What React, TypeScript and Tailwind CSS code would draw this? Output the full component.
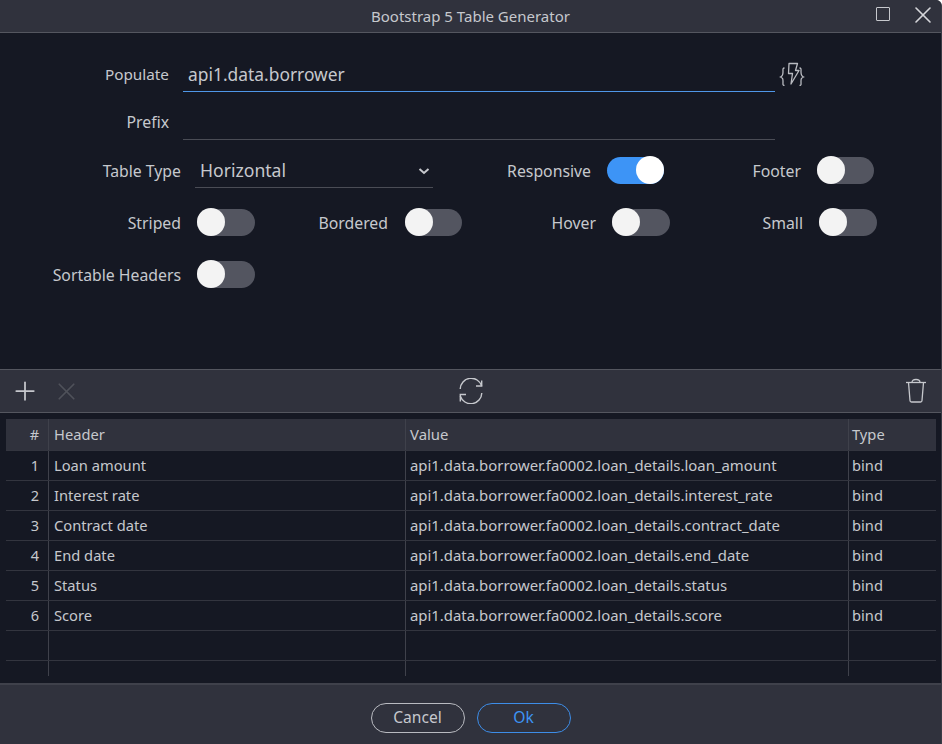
import React from "react";
import { Plus, X } from "lucide-react";

const font = "font-['Noto_Sans','Open_Sans',sans-serif]";

function Toggle({ on = false, className = "" }: { on?: boolean; className?: string }) {
  return (
    <div className={`relative h-[27px] shrink-0 rounded-full ${on ? "bg-[#3d94f6]" : "bg-[#535560]"} ${className}`}>
      <div className={`absolute top-[-1px] h-[28px] w-[28px] rounded-full ${on ? "right-0 bg-white" : "left-0 bg-[#f3f3f3]"}`} />
    </div>
  );
}

function Label({ text, w, size = "text-[15.8px]", className = "" }: { text: string; w: string; size?: string; className?: string }) {
  return <div className={`shrink-0 text-right leading-[20px] text-[#c6c8cd] ${size} ${w} ${className}`}>{text}</div>;
}

const rows = [
  ["1", "Loan amount", "api1.data.borrower.fa0002.loan_details.loan_amount", "bind"],
  ["2", "Interest rate", "api1.data.borrower.fa0002.loan_details.interest_rate", "bind"],
  ["3", "Contract date", "api1.data.borrower.fa0002.loan_details.contract_date", "bind"],
  ["4", "End date", "api1.data.borrower.fa0002.loan_details.end_date", "bind"],
  ["5", "Status", "api1.data.borrower.fa0002.loan_details.status", "bind"],
  ["6", "Score", "api1.data.borrower.fa0002.loan_details.score", "bind"],
  ["", "", "", ""],
  ["", "", "", ""],
];

function Row({ cells, header = false }: { cells: string[]; header?: boolean }) {
  const base = `h-full shrink-0 truncate text-[#c6c8cd] ${header ? "leading-[31px]" : "leading-[29px]"}`;
  return (
    <div className={`flex items-center border-b border-[#33353f] ${header ? "h-[32px] bg-[#30323d]" : "h-[30px]"}`}>
      <div className={`${base} w-[43px] border-r border-[#3f414b] pr-[9px] text-right text-[14.5px]`}>{cells[0]}</div>
      <div className={`${base} w-[357px] border-r border-[#3f414b] pl-[5px] text-[14.7px]`}>{cells[1]}</div>
      <div className={`${base} w-[443px] border-r border-[#3f414b] pl-[4px] text-[14.9px]`}>{cells[2]}</div>
      <div className={`${base} flex-1 pl-[3px] text-[14.7px]`}>{cells[3]}</div>
    </div>
  );
}

export default function App() {
  return (
    <div className={`flex h-[744px] w-[942px] flex-col overflow-hidden rounded-tr-[6px] border-r border-[#3a3c46] bg-[#151823] ${font}`}>
      {/* title bar */}
      <div className="relative flex h-[33px] shrink-0 items-center justify-center border-b border-[#54565f] bg-[#30323d]">
        <span className="text-[15px] leading-[32px] text-[#c6c8cd]">Bootstrap 5 Table Generator</span>
        <div className="absolute right-[51px] top-[7px] h-[14px] w-[14px] rounded-[1px] border border-[#c6c8cd]" />
        <X className="absolute right-[4px] top-[1px] h-[28px] w-[28px] text-[#d5d6da]" strokeWidth={1.4} />
      </div>

      {/* form */}
      <div className="flex h-[336px] shrink-0 flex-col">
        <div className="mt-[25px] flex h-[34px] items-end">
          <Label text="Populate" w="w-[169px]" size="text-[15.3px]" className="mb-[8px]" />
          <div className="ml-[14px] h-[34px] w-[592px] border-b border-[#4f97e8] pl-[5px] text-[17.4px] leading-[32px] text-[#c6c8cd]">api1.data.borrower</div>
          <svg className="mb-[6px] ml-[4px] h-[24px] w-[26px]" viewBox="0 0 26 24" fill="none" stroke="#b9bbc1" strokeWidth="1.3">
            <path d="M5.5 6C3.5 6 4 7.5 4 10s0 4-2.5 5C4 16 4 17 4 19.5s-.5 4 1.5 4" />
            <path d="M20.5 6c2 0 1.5 1.5 1.5 4s0 4 2.5 5c-2.5 1-2.5 2-2.5 4.5s.5 4-1.5 4" />
            <path d="M10 1.5h8.5l-2 7h3.5L12 22l1.5-10.5H9.5z" strokeLinejoin="round" />
          </svg>
        </div>
        <div className="mt-[14px] flex h-[34px] items-end">
          <Label text="Prefix" w="w-[169px]" className="mb-[8px]" />
          <div className="ml-[14px] h-[34px] w-[592px] border-b border-[#4a4c55]" />
        </div>
        <div className="mt-[14px] flex h-[34px] items-start">
          <Label text="Table Type" w="w-[181px]" className="mt-[7px]" />
          <div className="ml-[14px] flex h-[34px] w-[238px] items-center justify-between border-b border-[#4a4c55] pl-[5px] pr-[2px] text-[17.6px] text-[#c6c8cd]">
            <span>Horizontal</span>
            <svg className="mr-[1px] h-[10px] w-[12px]" viewBox="0 0 12 10" fill="none" stroke="#c6c8cd" strokeWidth="2"><path d="M1.5 3l4.5 4 4.5-4" /></svg>
          </div>
          <Label text="Responsive" w="w-[158px]" className="mt-[7px]" />
          <Toggle on className="ml-[16px] mt-[3px] w-[57px]" />
          <Label text="Footer" w="w-[137px]" className="mt-[7px]" />
          <Toggle className="ml-[16px] mt-[3px] w-[57px]" />
        </div>
        <div className="mt-[21px] flex h-[27px] items-center">
          <Label text="Striped" w="w-[181px]" />
          <Toggle className="ml-[16px] w-[58px]" />
          <Label text="Bordered" w="w-[133px]" />
          <Toggle className="ml-[17px] w-[57px]" />
          <Label text="Hover" w="w-[134px]" />
          <Toggle className="ml-[16px] w-[58px]" />
          <Label text="Small" w="w-[133px]" />
          <Toggle className="ml-[16px] w-[58px]" />
        </div>
        <div className="mt-[25px] flex h-[27px] items-center">
          <Label text="Sortable Headers" w="w-[181px]" />
          <Toggle className="ml-[16px] w-[58px]" />
        </div>
      </div>

      {/* toolbar */}
      <div className="flex h-[44px] shrink-0 items-center border-y border-[#54565f] bg-[#30323d] pl-[10px] pr-[14px]">
        <div className="flex flex-1 items-center gap-[12px]">
          <Plus className="h-[30px] w-[30px] text-[#c6c8cd]" strokeWidth={1.4} />
          <X className="h-[29px] w-[29px] text-[#4f515a]" strokeWidth={1.4} />
        </div>
        <svg className="ml-[4px] h-[26px] w-[26px]" viewBox="0 0 26 26" fill="none" stroke="#c6c8cd" strokeWidth="1.4">
          <path d="M2.2 11A11 11 0 0 1 23.7 8" />
          <path d="M23.7 2.5V8H18" />
          <path d="M23.8 15A11 11 0 0 1 2.3 18" />
          <path d="M2.3 23.5V16.5H8" />
        </svg>
        <div className="flex flex-1 justify-end">
          <svg className="h-[26px] w-[22px]" viewBox="0 0 22 26" fill="none" stroke="#c6c8cd" strokeWidth="1.3">
            <path d="M1 4.5H21" />
            <path d="M7 4.5c0-2 1.2-3 4-3s4 1 4 3" />
            <path d="M3.5 4.5L5 22.5A1.5 1.5 0 0 0 6.5 24H15.5A1.5 1.5 0 0 0 17 22.5L18.5 4.5" />
          </svg>
        </div>
      </div>

      {/* table */}
      <div className="mx-[6px] mt-[6px] h-[257px] w-[930px] shrink-0 overflow-hidden">
        <Row header cells={["#", "Header", "Value", "Type"]} />
        {rows.map((r, i) => (
          <Row key={i} cells={r} />
        ))}
      </div>

      {/* footer */}
      <div className="mt-[7px] flex flex-1 items-start justify-center gap-[12px] border-t-2 border-[#3f414b] bg-[#30323d] pt-[18px]">
        <button className="h-[30px] w-[94px] rounded-full border border-[#b9bbc1] text-[15.6px] text-[#c6c8cd]">Cancel</button>
        <button className="h-[30px] w-[94px] rounded-full border border-[#3d8de8] text-[15.6px] text-[#3d94f6]">Ok</button>
      </div>
    </div>
  );
}
